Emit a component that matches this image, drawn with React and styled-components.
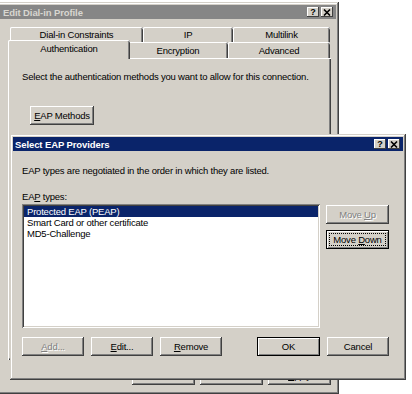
import React from "react";
import styled, { createGlobalStyle } from "styled-components";

const GlobalStyle = createGlobalStyle`
  html, body {
    margin: 0;
    padding: 0;
    background: #fff;
  }
  body {
    font-family: "Liberation Sans", Arial, sans-serif;
    font-size: 9.5px;
    letter-spacing: -0.2px;
    color: #000;
  }
`;

const Desktop = styled.div`
  position: relative;
  width: 412px;
  height: 394px;
  overflow: hidden;
  background: #fff;
`;

const Window = styled.div`
  position: absolute;
  left: ${(p) => p.$x}px;
  top: ${(p) => p.$y}px;
  width: ${(p) => p.$w}px;
  height: ${(p) => p.$h}px;
  box-sizing: border-box;
  padding: 3px;
  background: #d4d0c8;
  box-shadow: inset -1px -1px #404040, inset 1px 1px #d4d0c8,
    inset -2px -2px #808080, inset 2px 2px #fff;
  display: flex;
  flex-direction: column;
`;

const TitleBar = styled.div`
  height: 14px;
  flex: 0 0 14px;
  display: flex;
  align-items: center;
  padding: 0 3px 0 ${(p) => p.$pad}px;
  background: ${(p) => (p.$active ? "#0a246a" : "#868686")};
  color: ${(p) => (p.$active ? "#fff" : "#d8d6d0")};
  font-weight: bold;
  letter-spacing: -0.1px;
`;

const TitleText = styled.div`
  flex: 1;
  white-space: nowrap;
`;

const CaptionButton = styled.div`
  width: 12px;
  height: 10px;
  box-sizing: border-box;
  margin-left: 2px;
  display: flex;
  align-items: center;
  justify-content: center;
  background: #d4d0c8;
  color: #000;
  font-size: 9px;
  font-weight: bold;
  box-shadow: inset -1px -1px #404040, inset 1px 1px #fff;
`;

const BackBody = styled.div`
  flex: 1;
  display: flex;
  flex-direction: column;
  padding: 8px 5px 6px 8px;
`;

const TabRow = styled.div`
  display: flex;
  height: ${(p) => p.$h}px;
  padding: 0 1px 0 2px;
`;

const Tab = styled.div`
  flex: 0 0 ${(p) => p.$w}px;
  box-sizing: border-box;
  display: flex;
  align-items: center;
  justify-content: center;
  white-space: nowrap;
  background: #d4d0c8;
  border-radius: 2px 2px 0 0;
  box-shadow: inset 1px 0 #fff, inset 0 1px #fff, inset -1px 0 #404040,
    inset -2px 0 #808080;
  ${(p) =>
    p.$selected &&
    `
    margin: -2px -2px -1px;
    padding-bottom: 3px;
    position: relative;
    z-index: 1;
  `}
`;

const Panel = styled.div`
  flex: 1;
  display: flex;
  flex-direction: column;
  align-items: flex-start;
  padding: 13px 14px;
  box-shadow: inset 1px 1px #fff, inset -1px -1px #404040,
    inset -2px -2px #808080;
`;

const Line = styled.div`
  line-height: 12px;
  white-space: nowrap;
  margin-top: ${(p) => p.$mt || 0}px;
`;

const Button = styled.div`
  width: ${(p) => p.$w || 63}px;
  height: 19px;
  flex: 0 0 auto;
  box-sizing: border-box;
  display: flex;
  align-items: center;
  justify-content: center;
  margin-top: ${(p) => p.$mt || 0}px;
  margin-left: ${(p) => p.$ml || 0}px;
  background: #d4d0c8;
  white-space: nowrap;
  color: ${(p) => (p.$disabled ? "#808080" : "#000")};
  text-shadow: ${(p) => (p.$disabled ? "1px 1px #fff" : "none")};
  box-shadow: ${(p) =>
    p.$default
      ? "inset 0 0 0 1px #000, inset 2px 2px #fff, inset -2px -2px #808080"
      : "inset -1px -1px #404040, inset 1px 1px #fff, inset -2px -2px #808080"};
  outline: ${(p) => (p.$focused ? "1px dotted #000" : "none")};
  outline-offset: -4px;
`;

const BackButtons = styled.div`
  display: flex;
  justify-content: flex-end;
  gap: 5px;
  margin-top: 6px;
`;

const FrontBody = styled.div`
  flex: 1;
  display: flex;
  flex-direction: column;
  padding: 14px 14px 21px 9px;
`;

const ListArea = styled.div`
  display: flex;
  gap: 6px;
  height: 124px;
  margin-top: 1px;
`;

const ListBox = styled.div`
  width: 298px;
  box-sizing: border-box;
  padding: 2px;
  background: #fff;
  box-shadow: inset 1px 1px #808080, inset -1px -1px #fff,
    inset 2px 2px #404040, inset -2px -2px #d4d0c8;
`;

const ListItem = styled.div`
  height: 11px;
  line-height: 11px;
  padding-left: 3px;
  white-space: nowrap;
  background: ${(p) => (p.$selected ? "#0a246a" : "transparent")};
  color: ${(p) => (p.$selected ? "#fff" : "#000")};
`;

const SideButtons = styled.div`
  display: flex;
  flex-direction: column;
  gap: 6px;
  padding-top: 1px;
`;

const BottomBar = styled.div`
  display: flex;
  gap: 7px;
  margin-top: 9px;
`;

const Spacer = styled.div`
  flex: 1;
`;

const Captions = () => (
  <>
    <CaptionButton>?</CaptionButton>
    <CaptionButton>
      <svg width="8" height="7" viewBox="0 0 8 7">
        <path d="M1 0.5 L7 6.5 M7 0.5 L1 6.5" stroke="#000" strokeWidth="1.6" />
      </svg>
    </CaptionButton>
  </>
);

const App = () => {
  return (
    <Desktop>
      <GlobalStyle />
      <Window $x={-3} $y={2} $w={342} $h={392}>
        <TitleBar $pad={3}>
          <TitleText>Edit Dial-in Profile</TitleText>
          <Captions />
        </TitleBar>
        <BackBody>
          <TabRow $h={15}>
            <Tab $w={133}>Dial-in Constraints</Tab>
            <Tab $w={90}>IP</Tab>
            <Tab $w={97}>Multilink</Tab>
          </TabRow>
          <TabRow $h={16}>
            <Tab $w={122} $selected>
              Authentication
            </Tab>
            <Tab $w={100}>Encryption</Tab>
            <Tab $w={102}>Advanced</Tab>
          </TabRow>
          <Panel>
            <Line>
              Select the authentication methods you want to allow for this
              connection.
            </Line>
            <Button $w={64} $mt={23} $ml={8}>
              <u>E</u>AP Methods
            </Button>
          </Panel>
          <BackButtons>
            <Button>OK</Button>
            <Button>Cancel</Button>
            <Button>
              <u>A</u>pply
            </Button>
          </BackButtons>
        </BackBody>
      </Window>

      <Window $x={10} $y={134} $w={396} $h={246}>
        <TitleBar $active $pad={2}>
          <TitleText>Select EAP Providers</TitleText>
          <Captions />
        </TitleBar>
        <FrontBody>
          <Line>
            EAP types are negotiated in the order in which they are listed.
          </Line>
          <Line $mt={14}>
            EA<u>P</u> types:
          </Line>
          <ListArea>
            <ListBox>
              <ListItem $selected>Protected EAP (PEAP)</ListItem>
              <ListItem>Smart Card or other certificate</ListItem>
              <ListItem>MD5-Challenge</ListItem>
            </ListBox>
            <SideButtons>
              <Button $disabled>
                Move&nbsp;<u>U</u>p
              </Button>
              <Button $default $focused>
                Move&nbsp;<u>D</u>own
              </Button>
            </SideButtons>
          </ListArea>
          <BottomBar>
            <Button $w={62} $disabled>
              <u>A</u>dd...
            </Button>
            <Button $w={62}>
              <u>E</u>dit...
            </Button>
            <Button $w={62}>
              <u>R</u>emove
            </Button>
            <Spacer />
            <Button $default>OK</Button>
            <Button $w={62}>Cancel</Button>
          </BottomBar>
        </FrontBody>
      </Window>
    </Desktop>
  );
};

export default App;
